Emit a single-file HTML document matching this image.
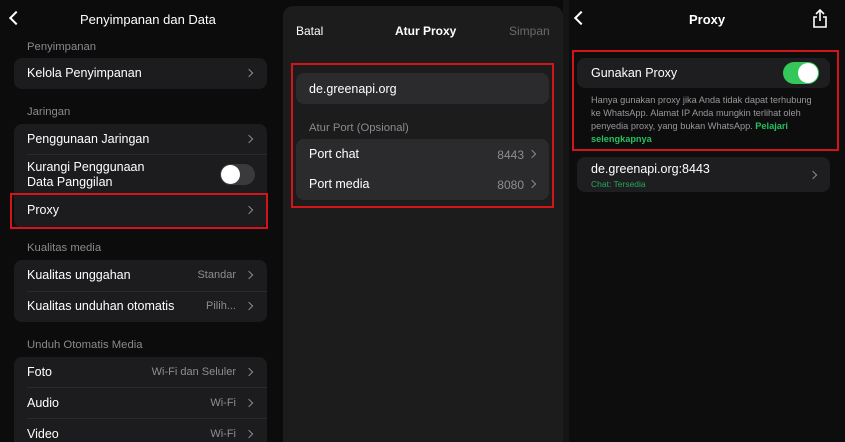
<!DOCTYPE html>
<html style="width:845px;height:442px;overflow:hidden"><head><meta charset="utf-8"><style>
*{margin:0;padding:0;box-sizing:border-box}
body{width:845px;height:442px;background:#0b0b0b;font-family:"Liberation Sans",sans-serif;color:#fff;position:relative;overflow:hidden}
.a{position:absolute}
.cell{position:absolute;background:#1c1c1e;border-radius:8px}
.t{position:absolute;font-size:12.5px;white-space:nowrap}
.h{position:absolute;font-size:11.3px;color:#8a8a8e;white-space:nowrap}
.v{position:absolute;font-size:11px;color:#8d8d92;white-space:nowrap;text-align:right}
.ch{position:absolute;width:6px;height:6px;border-right:1.5px solid #8a8a8e;border-top:1.5px solid #8a8a8e;transform:rotate(45deg)}
.sep{position:absolute;height:1px;background:#2a2a2c}
.red{position:absolute;border:2.5px solid #d2141b}
</style></head><body>
<div class="a" style="left:0;top:0;width:280px;height:442px;background:#0c0c0c"></div>
<div class="a" style="left:11px;top:13px;width:10px;height:10px;border-left:2.5px solid #fff;border-bottom:2.5px solid #fff;transform:rotate(45deg)"></div>
<div class="t" style="left:80px;top:12px;font-size:13px">Penyimpanan dan Data</div>
<div class="h" style="left:27px;top:41px">Penyimpanan</div>
<div class="cell" style="left:14px;top:58px;width:253px;height:31px"></div>
<div class="t" style="left:27px;top:66px">Kelola Penyimpanan</div><div class="ch" style="left:246px;top:70px"></div>
<div class="h" style="left:27px;top:106px">Jaringan</div>
<div class="cell" style="left:14px;top:124px;width:253px;height:104px"></div>
<div class="t" style="left:27px;top:132px">Penggunaan Jaringan</div><div class="ch" style="left:246px;top:136px"></div>
<div class="sep" style="left:27px;top:154px;width:240px"></div>
<div class="t" style="left:27px;top:160px;line-height:15px">Kurangi Penggunaan<br>Data Panggilan</div>
<div class="a" style="left:220px;top:164px;width:35px;height:21px;border-radius:11px;background:#3a3a3c"></div>
<div class="a" style="left:221px;top:165px;width:19px;height:19px;border-radius:50%;background:#fff"></div>
<div class="t" style="left:27px;top:203px">Proxy</div><div class="ch" style="left:246px;top:207px"></div>
<div class="red" style="left:10px;top:193px;width:258px;height:36px"></div>
<div class="h" style="left:27px;top:242px">Kualitas media</div>
<div class="cell" style="left:14px;top:260px;width:253px;height:62px"></div>
<div class="t" style="left:27px;top:268px">Kualitas unggahan</div><div class="v" style="left:170px;top:269px;width:66px">Standar</div><div class="ch" style="left:246px;top:272px"></div>
<div class="sep" style="left:27px;top:291px;width:240px"></div>
<div class="t" style="left:27px;top:299px">Kualitas unduhan otomatis</div><div class="v" style="left:170px;top:300px;width:66px">Pilih...</div><div class="ch" style="left:246px;top:303px"></div>
<div class="h" style="left:27px;top:339px">Unduh Otomatis Media</div>
<div class="cell" style="left:14px;top:357px;width:253px;height:95px"></div>
<div class="t" style="left:27px;top:365px">Foto</div><div class="v" style="left:130px;top:366px;width:106px">Wi-Fi dan Seluler</div><div class="ch" style="left:246px;top:369px"></div>
<div class="sep" style="left:27px;top:387px;width:240px"></div>
<div class="t" style="left:27px;top:396px">Audio</div><div class="v" style="left:170px;top:397px;width:66px">Wi-Fi</div><div class="ch" style="left:246px;top:400px"></div>
<div class="sep" style="left:27px;top:418px;width:240px"></div>
<div class="t" style="left:27px;top:427px">Video</div><div class="v" style="left:170px;top:428px;width:66px">Wi-Fi</div><div class="ch" style="left:246px;top:431px"></div>
<div class="a" style="left:283px;top:6px;width:280px;height:436px;background:#1c1c1d;border-radius:10px 10px 0 0"></div>
<div class="a" style="left:563px;top:0;width:6px;height:442px;background:#151515"></div>
<div class="t" style="left:296px;top:24px;font-size:12px">Batal</div>
<div class="t" style="left:395px;top:24px;font-size:12px;font-weight:bold">Atur Proxy</div>
<div class="t" style="left:509px;top:24px;font-size:12px;color:#6a6a6e">Simpan</div>
<div class="a" style="left:296px;top:73px;width:253px;height:31px;background:#2b2b2d;border-radius:8px"></div>
<div class="t" style="left:309px;top:82px">de.greenapi.org</div>
<div class="h" style="left:309px;top:122px">Atur Port (Opsional)</div>
<div class="a" style="left:296px;top:139px;width:253px;height:61px;background:#2b2b2d;border-radius:8px"></div>
<div class="t" style="left:309px;top:147px">Port chat</div><div class="v" style="left:470px;top:148px;width:54px;font-size:12px">8443</div><div class="ch" style="left:529px;top:151px"></div>
<div class="t" style="left:309px;top:177px">Port media</div><div class="v" style="left:470px;top:178px;width:54px;font-size:12px">8080</div><div class="ch" style="left:529px;top:181px"></div>
<div class="red" style="left:291px;top:63px;width:263px;height:145px"></div>
<div class="a" style="left:569px;top:0;width:276px;height:442px;background:#0d0d0e"></div>
<div class="a" style="left:576px;top:13px;width:10px;height:10px;border-left:2.5px solid #fff;border-bottom:2.5px solid #fff;transform:rotate(45deg)"></div>
<div class="t" style="left:689px;top:12px;font-size:13px;font-weight:bold">Proxy</div>
<svg class="a" style="left:812px;top:9px" width="16" height="20" viewBox="0 0 16 20"><path d="M8 1v11M4 5l4-4 4 4M5 8H2v10h12V8h-3" fill="none" stroke="#fff" stroke-width="1.6"/></svg>
<div class="cell" style="left:577px;top:58px;width:253px;height:30px;background:#1e1e20"></div>
<div class="t" style="left:591px;top:66px">Gunakan Proxy</div>
<div class="a" style="left:783px;top:62px;width:36px;height:22px;border-radius:11px;background:#34c759"></div>
<div class="a" style="left:798px;top:63px;width:20px;height:20px;border-radius:50%;background:#fff"></div>
<div class="a" style="left:591px;top:94px;width:240px;font-size:9.2px;line-height:13px;color:#98989d;white-space:nowrap">Hanya gunakan proxy jika Anda tidak dapat terhubung<br>ke WhatsApp. Alamat IP Anda mungkin terlihat oleh<br>penyedia proxy, yang bukan WhatsApp. <span style="color:#25c05f;font-weight:bold">Pelajari</span><br><span style="color:#25c05f;font-weight:bold">selengkapnya</span></div>
<div class="red" style="left:572px;top:50px;width:267px;height:101px"></div>
<div class="cell" style="left:577px;top:157px;width:253px;height:35px;background:#1e1e20"></div>
<div class="t" style="left:591px;top:162px">de.greenapi.org:8443</div>
<div class="t" style="left:591px;top:179px;font-size:8.5px;color:#25a85a">Chat: Tersedia</div>
<div class="ch" style="left:810px;top:172px"></div>
</body></html>
